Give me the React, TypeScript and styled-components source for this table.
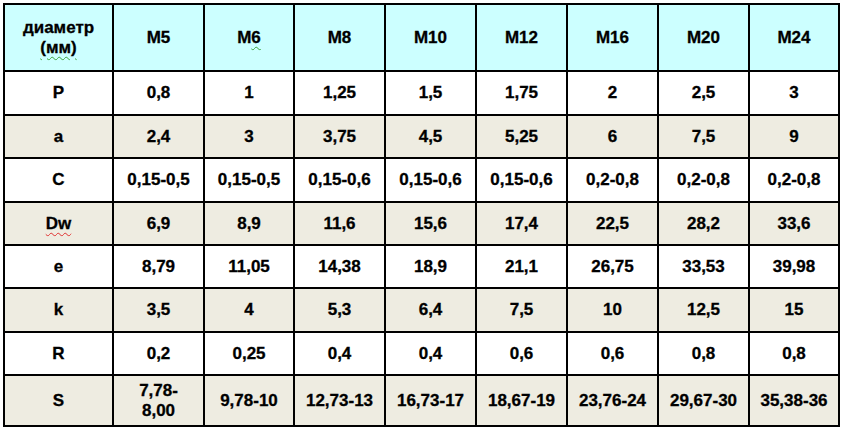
import styled, { createGlobalStyle } from 'styled-components';

const GlobalStyle = createGlobalStyle`
	html, body {
		margin: 0;
		padding: 0;
		background: #ffffff;
	}
	body {
		font-family: 'Liberation Sans', Arial, sans-serif;
	}
`;

const Page = styled.div`
	padding: 3px 0 0 3px;
	width: 841px;
	height: 431px;
	box-sizing: border-box;
	background: #ffffff;
`;

const Table = styled.table`
	border-collapse: collapse;
	table-layout: fixed;
	width: 835px;
	font-family: 'Liberation Sans', Arial, sans-serif;
	font-weight: bold;
	font-size: 17px;
	line-height: 20px;
	color: #000;
	-webkit-text-stroke: 0.3px #000;
`;

const Row = styled.tr<{ $bg: string; $h: number }>`
	background: ${(p) => p.$bg};
	height: ${(p) => p.$h}px;
`;

const Cell = styled.td`
	border: 2px solid #000;
	text-align: center;
	vertical-align: middle;
	padding: 0 4px;
	white-space: pre-line;
`;

// spell-check squiggles, as in the word processor screenshot
const Squiggle = styled.span<{ $color: string }>`
	text-decoration: underline wavy ${(p) => p.$color};
	text-decoration-thickness: 1px;
	text-underline-offset: 3px;
`;

const widths = [109, 91, 90, 91, 91, 91, 91, 91, 90];

const header = ['M5', 'M6', 'M8', 'M10', 'M12', 'M16', 'M20', 'M24'];

const rows: { label: string; values: string[] }[] = [
	{ label: 'P', values: ['0,8', '1', '1,25', '1,5', '1,75', '2', '2,5', '3'] },
	{ label: 'a', values: ['2,4', '3', '3,75', '4,5', '5,25', '6', '7,5', '9'] },
	{
		label: 'C',
		values: ['0,15-0,5', '0,15-0,5', '0,15-0,6', '0,15-0,6', '0,15-0,6', '0,2-0,8', '0,2-0,8', '0,2-0,8'],
	},
	{ label: 'Dw', values: ['6,9', '8,9', '11,6', '15,6', '17,4', '22,5', '28,2', '33,6'] },
	{ label: 'e', values: ['8,79', '11,05', '14,38', '18,9', '21,1', '26,75', '33,53', '39,98'] },
	{ label: 'k', values: ['3,5', '4', '5,3', '6,4', '7,5', '10', '12,5', '15'] },
	{ label: 'R', values: ['0,2', '0,25', '0,4', '0,4', '0,6', '0,6', '0,8', '0,8'] },
	{
		label: 'S',
		values: ['7,78-\n8,00', '9,78-10', '12,73-13', '16,73-17', '18,67-19', '23,76-24', '29,67-30', '35,38-36'],
	},
];

const rowHeights = [44, 43, 44, 43, 43, 44, 43, 51];

const HEADER_BG = '#ccffff';
const TAN = '#eeece1';

const renderHeader = (h: string) =>
	h === 'M6' ? (
		<>
			M<Squiggle $color='#3aa33a'>6</Squiggle>
		</>
	) : (
		h
	);

const App = () => {
	return (
		<Page>
			<GlobalStyle />
			<Table>
				<colgroup>
					{widths.map((w, i) => (
						<col key={i} style={{ width: w }} />
					))}
				</colgroup>
				<tbody>
					<Row $bg={HEADER_BG} $h={67}>
						<Cell>
							диаметр
							<br />
							<Squiggle $color='#3aa33a'>(мм)</Squiggle>
						</Cell>
						{header.map((h) => (
							<Cell key={h}>{renderHeader(h)}</Cell>
						))}
					</Row>
					{rows.map((r, i) => (
						<Row key={r.label} $bg={i % 2 === 0 ? '#ffffff' : TAN} $h={rowHeights[i]}>
							<Cell>
								{r.label === 'Dw' ? <Squiggle $color='#e03030'>Dw</Squiggle> : r.label}
							</Cell>
							{r.values.map((v, j) => (
								<Cell key={j}>{v}</Cell>
							))}
						</Row>
					))}
				</tbody>
			</Table>
		</Page>
	);
};

export default App;
